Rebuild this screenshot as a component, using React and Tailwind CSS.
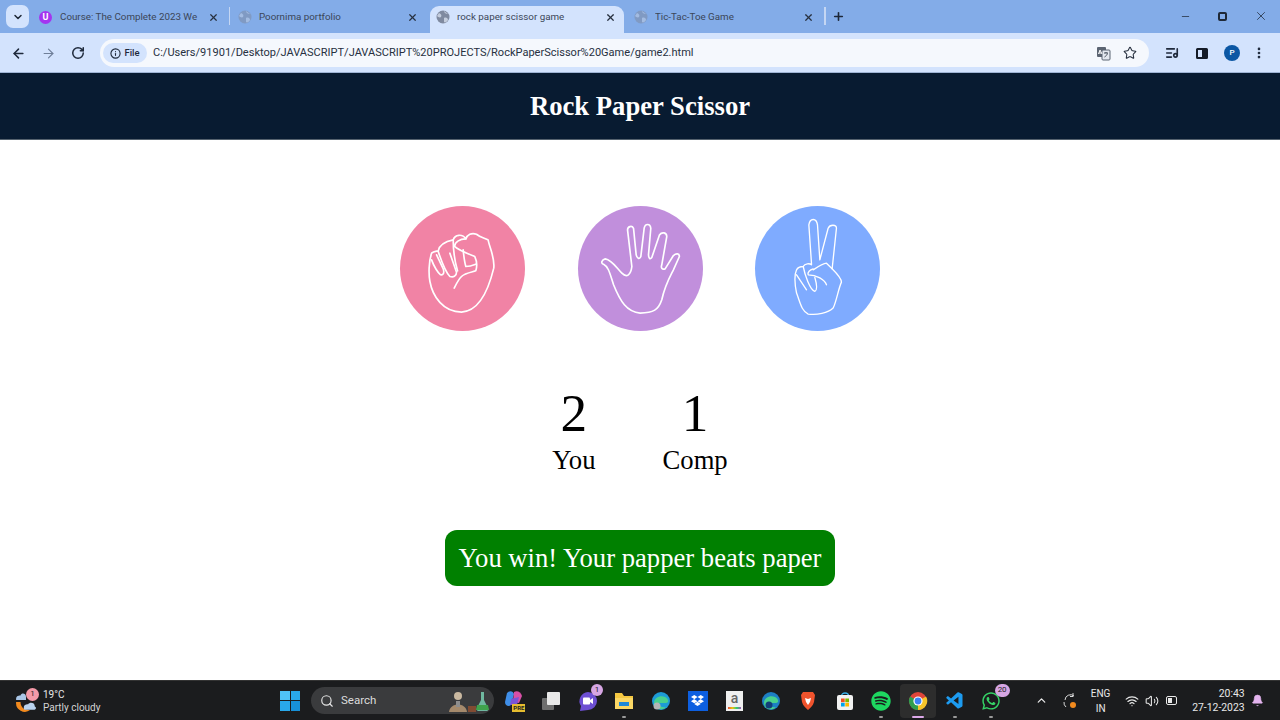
import React from "react";
import { ArrowLeft, ArrowRight, RotateCw, X, Plus, Minus, ChevronDown, ChevronUp, Star, Info, MoreVertical, Search, Wifi, Volume2, Bell, ListMusic } from "lucide-react";
import { FaDropbox, FaSpotify, FaWhatsapp } from "react-icons/fa";
import { VscVscode } from "react-icons/vsc";

const ui = "font-['Roboto','Noto_Sans',sans-serif]";

function Globe({ faint }) {
  return (
    <svg width="14" height="14" viewBox="0 0 14 14" className={`shrink-0 ${faint ? "opacity-50" : ""}`}>
      <circle cx="7" cy="7" r="6.5" fill="#7f8aa0" />
      <path d="M3 3 C5 4 6 5 5 7 C4 8 2 7 1 6 M8 1 C8 3 10 4 12 4 M8 8 C10 7 12 8 12 10 C11 12 9 13 8 12 Z" fill="#c4cddd" />
    </svg>
  );
}

function Tab({ title, active, icon, className }) {
  return (
    <div className={`flex h-[27px] w-[194px] shrink-0 items-center rounded-t-[9px] pb-[5px] pl-[6px] pr-[8.5px] ${active ? "bg-[#d3e3fd]" : ""} ${className || ""}`}>
      <span className="flex w-[21px] shrink-0 items-center">{icon || <Globe faint={!active} />}</span>
      <span className="min-w-0 flex-1 overflow-hidden whitespace-nowrap text-[9.8px] text-[#3b4658]">{title}</span>
      <X size={11} strokeWidth={2.6} className="shrink-0 text-[#27303f]" />
    </div>
  );
}

function Sep() {
  return <div className="h-[18px] w-[1.5px] shrink-0 bg-[#c4d6f3]" />;
}

function Chrome() {
  return (
    <div className={`${ui} flex h-[73px] flex-col bg-[#83ace8]`}>
      <div className="flex h-[33px] shrink-0 items-end">
        <div className="mb-[5px] ml-[6px] mr-[4px] flex h-[23px] w-[23px] shrink-0 items-center justify-center rounded-[7px] bg-[#d3e3fd]">
          <ChevronDown size={12} strokeWidth={3} className="text-[#1f2937]" />
        </div>
        <Tab
          title="Course: The Complete 2023 We"
          icon={
            <span className="flex h-[13px] w-[13px] items-center justify-center rounded-full bg-[#a435f0] text-[9px] font-bold leading-none text-white">U</span>
          }
        />
        <div className="mx-[1.75px] mb-[8px] flex"><Sep /></div>
        <Tab title="Poornima portfolio" />
        <Tab active title="rock paper scissor game" className="ml-[4px]" />
        <Tab title="Tic-Tac-Toe Game" className="ml-[4px]" />
        <div className="mb-[8px] ml-[2px] flex items-center">
          <Sep />
          <Plus size={13} strokeWidth={3} className="ml-[6px] text-[#1c2738]" />
        </div>
        <div className="mb-[10px] ml-auto flex items-center text-[#1f2937]">
          <Minus size={11} strokeWidth={1.6} className="mr-[27px]" />
          <span className="mr-[27px] h-[9px] w-[9px] rounded-[2px] border-2 border-[#1f2937]" />
          <X size={14} strokeWidth={1.3} className="mr-[12px]" />
        </div>
      </div>
      <div className="flex h-[40px] items-center border-b border-[#9fb4d4] bg-[#d3e3fd] pt-[1px]">
        <ArrowLeft size={15} strokeWidth={2.4} className="ml-[11px] text-[#1f2a3c]" />
        <ArrowRight size={15} strokeWidth={1.8} className="ml-[15px] text-[#6f7f99]" />
        <RotateCw size={14} strokeWidth={2.6} className="ml-[15px] text-[#1f2a3c]" />
        <div className="ml-[15px] flex h-[28px] w-[1049px] items-center rounded-full bg-[#f5f8fd]">
          <div className="ml-[3px] flex h-[20px] w-[44px] items-center justify-center gap-[3px] rounded-full bg-[#d3e3fd] text-[9.5px] font-medium text-[#1f2a3c]">
            <Info size={11} strokeWidth={2.4} />
            File
          </div>
          <span className="ml-[6px] whitespace-nowrap text-[11.04px] text-[#27303f]">C:/Users/91901/Desktop/JAVASCRIPT/JAVASCRIPT%20PROJECTS/RockPaperScissor%20Game/game2.html</span>
          <svg width="15" height="15" viewBox="0 0 15 15" className="ml-auto">
            <rect x="1" y="1" width="9" height="10" rx="1" fill="#5b6472" />
            <rect x="6" y="4" width="8" height="10" rx="1" fill="#e3e8f0" stroke="#5b6472" />
            <path d="M8 7h4M10 6v1M8.5 11 C10 10 11 9 11.5 7.5" stroke="#3f4854" fill="none" />
            <path d="M4 4 L2.5 8 M4 4 L6 8 M3 7h2.5" stroke="#fff" fill="none" />
          </svg>
          <Star size={14} strokeWidth={1.8} className="ml-[12px] mr-[12px] text-[#27303f]" />
        </div>
        <ListMusic size={14} strokeWidth={2.8} className="ml-[16px] text-[#1f2a3c]" />
        <div className="ml-[17px] flex h-[11px] w-[12px] justify-end rounded-[1.5px] border-2 border-[#141b27]">
          <span className="h-full w-[4px] bg-[#141b27]" />
        </div>
        <div className="ml-[16px] flex h-[16px] w-[16px] items-center justify-center rounded-full bg-[#0b57a4] text-[8px] font-medium text-white">P</div>
        <MoreVertical size={14} strokeWidth={2.6} className="ml-[12px] text-[#1f2a3c]" />
      </div>
    </div>
  );
}

const handCls = "fill-none stroke-white";

function Fist() {
  return (
    <svg viewBox="30 33 376 376" className="h-full w-full" strokeLinecap="round" strokeLinejoin="round">
      <g className={handCls} strokeWidth="5">
        <path d="M125,175 C116,200 116,240 120,260 C128,305 160,352 215,352 C265,350 295,290 312,220 C316,190 300,160 295,135 C288,130 272,128 260,118 C245,112 232,120 228,132 C218,116 195,118 190,135 C175,138 150,145 145,168 C135,170 130,170 125,175 Z" />
        <path d="M125,195 C132,215 145,235 152,240 C160,242 164,235 160,222 L140,180" />
        <path d="M145,170 C155,200 170,235 180,245 C190,248 200,245 200,232 L180,175" />
        <path d="M190,135 C190,155 192,190 203,228" />
        <path d="M228,132 C210,132 193,142 195,155 C205,165 230,175 255,185 C262,200 262,215 258,228 C245,232 225,235 215,245 C205,255 198,270 193,280" />
        <path d="M220,165 C222,185 225,205 228,215 C238,215 248,212 258,208" />
      </g>
    </svg>
  );
}

function Palm() {
  return (
    <svg viewBox="563 33 376 376" className="h-full w-full" strokeLinecap="round" strokeLinejoin="round">
      <path className={handCls} strokeWidth="5" d="M645,192 C635,195 630,205 640,208 C655,215 660,240 670,270 C690,320 710,352 750,355 C790,355 805,345 815,315 C825,270 840,245 850,225 L868,185 C868,175 858,175 850,182 L825,222 C815,225 812,218 815,210 L830,125 C830,112 815,110 808,120 L785,188 C780,195 775,190 775,180 L782,100 C780,85 765,85 762,100 L752,185 C748,195 740,190 738,180 L730,100 C725,90 712,95 712,105 L725,215 C722,240 710,250 695,235 C680,220 665,195 645,192 Z" />
    </svg>
  );
}

function Peace() {
  return (
    <svg viewBox="30 33 376 376" className="h-full w-full" strokeLinecap="round" strokeLinejoin="round">
      <g className={handCls} strokeWidth="4">
        <path d="M200,207 L192,90 C195,68 215,68 218,90 L225,195 L250,100 C255,88 275,88 275,100 L262,222 C275,235 290,250 290,262 C280,285 275,320 265,340 C250,355 215,362 190,358 C170,350 165,320 155,295 C150,270 148,240 155,225 C160,215 170,215 175,215 C180,205 195,205 200,210" />
        <path d="M175,215 C180,240 195,285 210,290 C220,285 215,265 210,248" />
        <path d="M155,240 L185,285" />
        <path d="M205,222 C195,225 187,232 190,240 C215,240 240,255 245,270" />
        <path d="M205,225 C220,215 235,205 245,205 L262,222" />
      </g>
    </svg>
  );
}

function Choice({ color, children }) {
  return <div className={`h-[125px] w-[125px] rounded-full ${color}`}>{children}</div>;
}

function Score({ value, label }) {
  return (
    <div className="flex flex-col items-center">
      <p className="text-[53.3px] leading-[58px] text-black">{value}</p>
      <p className="mt-[2px] text-[26.67px] leading-[30px] text-black">{label}</p>
    </div>
  );
}

function Main() {
  return (
    <div className="flex h-[607px] flex-col font-['Liberation_Serif',serif]">
      <header className="flex h-[67px] items-center justify-center border-b border-[#55626e] bg-[#081b31]">
        <h1 className="text-[26.67px] font-bold text-white">Rock Paper Scissor</h1>
      </header>
      <div className="mt-[66px] flex justify-center gap-[52.5px]">
        <Choice color="bg-[#f183a5]"><Fist /></Choice>
        <Choice color="bg-[#c18fdc]"><Palm /></Choice>
        <Choice color="bg-[#7fabff]"><Peace /></Choice>
      </div>
      <div className="mt-[54px] flex justify-center gap-[67px]">
        <Score value="2" label="You" />
        <Score value="1" label="Comp" />
      </div>
      <div className="mt-[55px] flex justify-center">
        <div className="rounded-[12px] bg-[#008000] px-[13.5px] py-[13px] text-[26.67px] leading-[30px] text-white">You win! Your papper beats paper</div>
      </div>
    </div>
  );
}

function TaskIcon({ children, active, dot }) {
  return (
    <div className={`relative flex h-[34px] w-[36.7px] shrink-0 items-center justify-center rounded-[4px] ${active ? "bg-[#2d2d2d]" : ""}`}>
      {children}
      {dot && <span className={`absolute bottom-[0px] h-[2px] rounded-full ${active ? "w-[12px] bg-[#dca8e8]" : "w-[4px] bg-[#9a9a9a]"}`} />}
    </div>
  );
}

function Badge({ children, className }) {
  return <span className={`absolute flex items-center justify-center rounded-full text-[8px] leading-none text-[#222] ${className}`}>{children}</span>;
}

function Taskbar() {
  return (
    <div className={`${ui} flex h-[40px] items-center border-t border-[#333] bg-[#1b1c1e] text-[#e8e8e8]`}>
      <div className="relative ml-[15px] flex h-[24px] w-[28px] shrink-0 items-center">
        <svg width="22" height="22" viewBox="0 0 20 20">
          <path d="M1 8 C1 5 4 5 5 5 C6 2 10 3 10 6 L10 9 L1 9 Z" fill="#a9c5e6" />
          <path d="M1 11 A8 8 0 0 0 14 18 C9 19 5 16 5 11 Z" fill="#f28a1e" />
          <path d="M8 16 C8 13 11 13 12 13 C13 11 18 11 18 15 C20 16 19 18 17 18 L9 18 C8 18 8 17 8 16 Z" fill="#b9d3ef" />
        </svg>
        <Badge className="left-[11px] top-[-1px] h-[13px] w-[13px] bg-[#f49aa8]">1</Badge>
      </div>
      <div className="w-[70px] shrink-0 text-[10px] leading-[13px]">
        <p>19°C</p>
        <p className="whitespace-nowrap text-[#d4d4d4]">Partly cloudy</p>
      </div>
      <div className="ml-[167px] grid h-[20px] w-[20px] shrink-0 grid-cols-2 gap-[1px]">
        <span className="bg-[#4fc3f7]" /><span className="bg-[#29a8ea]" />
        <span className="bg-[#29a8ea]" /><span className="bg-[#1790d8]" />
      </div>
      <div className="relative ml-[11px] flex h-[27px] w-[183px] shrink-0 items-center rounded-full bg-[#3a3b3d] pl-[9px] text-[11.5px] text-[#dcdcdc]">
        <Search size={14} strokeWidth={2} className="text-[#e5e5e5]" />
        <span className="ml-[7px]">Search</span>
        <svg width="44" height="24" viewBox="0 0 44 24" className="absolute right-[2px] top-[2px]">
          <circle cx="10" cy="7" r="4" fill="#c9b8a0" />
          <path d="M1 23 C2 13 18 13 19 23 Z" fill="#a58a6c" />
          <path d="M8 12h4v6H8z" fill="#8d8d8d" />
          <path d="M20 23h8v-6h-8z" fill="#a0522d" opacity="0.7" />
          <path d="M33 3h3v8l4 8a2 2 0 0 1-2 3h-7a2 2 0 0 1-2-3l4-8z" fill="#6fb8a0" />
          <path d="M29 16h11l1 5h-13z" fill="#3fa34d" />
        </svg>
      </div>
      <div className="ml-[2px] flex items-center">
        <TaskIcon>
          <div className="relative h-[22px] w-[20px]">
            <svg width="20" height="20" viewBox="0 0 20 20">
              <path d="M3 3 C6 0 9 1 10 4 L7 15 C5 17 1 16 1 12 Z" fill="#3f8ee8" />
              <path d="M10 2 C13 0 17 2 18 6 L15 13 L9 12 Z" fill="#d84fa7" />
              <path d="M7 9 L15 7 L13 15 L6 15 Z" fill="#7b54d6" />
            </svg>
            <span className="absolute bottom-0 right-[-1px] flex h-[8px] w-[13px] items-center justify-center bg-[#e6bd2f] text-[6px] font-bold leading-none text-[#222]">PRE</span>
          </div>
        </TaskIcon>
        <TaskIcon>
          <div className="relative h-[18px] w-[18px]">
            <span className="absolute bottom-0 left-0 h-[12px] w-[12px] rounded-[1px] bg-[#6e6e6e]" />
            <span className="absolute right-0 top-0 h-[13px] w-[13px] rounded-[1px] bg-[#e8e8e8]" />
          </div>
        </TaskIcon>
        <TaskIcon>
          <svg width="20" height="20" viewBox="0 0 20 20">
            <path d="M10 1 A9 9 0 0 1 10 19 L2 20 L3 15 A9 9 0 0 1 10 1 Z" fill="#6d4fd3" />
            <rect x="5" y="6.5" width="7" height="7" rx="1" fill="#fff" />
            <path d="M12 9l3-2v6l-3-2z" fill="#fff" />
          </svg>
          <Badge className="right-[3px] top-[0px] h-[12px] w-[12px] bg-[#d7a6e4]">1</Badge>
        </TaskIcon>
        <TaskIcon dot>
          <svg width="20" height="20" viewBox="0 0 20 20">
            <path d="M1 2h7l2 3h9v13H1z" fill="#f5c842" />
            <path d="M1 7h18v11H1z" fill="#fbd765" />
            <rect x="5" y="11" width="10" height="4" fill="#1e88d8" />
          </svg>
        </TaskIcon>
        <TaskIcon>
          <svg width="20" height="20" viewBox="0 0 20 20">
            <circle cx="10" cy="10" r="9" fill="#1d9bd6" />
            <path d="M3 12 C3 6 10 4 14 6 C18 8 18 12 15 12 L8 12 C7 14 10 17 15 16 C12 20 3 19 3 12 Z" fill="#48d18f" />
            <circle cx="6" cy="15" r="3.5" fill="#b5b5b5" />
          </svg>
        </TaskIcon>
        <TaskIcon>
          <div className="flex h-[20px] w-[20px] items-center justify-center bg-[#0d5fe0]">
            <FaDropbox size={13} className="text-white" />
          </div>
        </TaskIcon>
        <TaskIcon>
          <div className="flex h-[20px] w-[17px] flex-col items-center bg-[#efefef] text-[14px] font-medium leading-[15px] text-[#666]">
            a
            <span className="mt-[1px] h-[2px] w-[13px] bg-[linear-gradient(90deg,#e74c3c,#f1c40f,#2ecc71,#9b59b6)]" />
          </div>
        </TaskIcon>
        <TaskIcon>
          <svg width="20" height="20" viewBox="0 0 20 20">
            <circle cx="10" cy="10" r="9" fill="#1d7fc4" />
            <path d="M3 12 C3 6 10 4 14 6 C18 8 18 12 15 12 L8 12 C7 14 10 17 15 16 C12 20 3 19 3 12 Z" fill="#48d18f" />
            <circle cx="8" cy="14" r="3.5" fill="#123f7a" />
          </svg>
        </TaskIcon>
        <TaskIcon>
          <svg width="16" height="20" viewBox="0 0 16 20">
            <path d="M3 1h10l2 3-1 7c-1 4-4 6-6 8-2-2-5-4-6-8L1 4z" fill="#f0532d" />
            <path d="M5 7l3 1 3-1-1 4-2 3-2-3z" fill="#fff" />
          </svg>
        </TaskIcon>
        <TaskIcon>
          <svg width="18" height="20" viewBox="0 0 18 20">
            <path d="M5.5 5 C5.5 1 12.5 1 12.5 5" stroke="#3ab0e8" strokeWidth="1.3" fill="none" />
            <rect x="1" y="4" width="16" height="15" rx="2" fill="#f2f2f2" />
            <rect x="5" y="7.5" width="3.7" height="3.7" fill="#f25022" />
            <rect x="9.3" y="7.5" width="3.7" height="3.7" fill="#7fba00" />
            <rect x="5" y="11.8" width="3.7" height="3.7" fill="#00a4ef" />
            <rect x="9.3" y="11.8" width="3.7" height="3.7" fill="#ffb900" />
          </svg>
        </TaskIcon>
        <TaskIcon dot>
          <FaSpotify size={20} className="text-[#1ed760]" />
        </TaskIcon>
        <TaskIcon active dot>
          <svg width="20" height="20" viewBox="0 0 20 20">
            <circle cx="10" cy="10" r="9" fill="#e0453a" />
            <path d="M10 10 L18 5.5 A9 9 0 0 1 10 19 Z" fill="#f6c42a" />
            <path d="M10 10 L10 19 A9 9 0 0 1 2.2 5.5 Z" fill="#2f9e4f" />
            <circle cx="10" cy="10" r="4.6" fill="#fff" />
            <circle cx="10" cy="10" r="3.4" fill="#3b82f6" />
          </svg>
        </TaskIcon>
        <TaskIcon dot>
          <VscVscode size={20} className="text-[#1d9bf0]" />
        </TaskIcon>
        <TaskIcon dot>
          <FaWhatsapp size={20} className="text-[#35d366]" />
          <Badge className="right-[0px] top-[0px] h-[13px] w-[15px] bg-[#d7a6e4]">20</Badge>
        </TaskIcon>
      </div>
      <ChevronUp size={13} strokeWidth={2.4} className="ml-[25px] shrink-0" />
      <svg width="16" height="18" viewBox="0 0 16 18" className="ml-[14px] shrink-0">
        <path d="M3 8 A5.5 5.5 0 0 1 12 4 M11 1v3.5H8M4 15 A5.5 5.5 0 0 1 2 10" stroke="#d9d9d9" strokeWidth="1" fill="none" />
        <circle cx="11" cy="13" r="3" fill="#f28a1e" />
      </svg>
      <div className="ml-[10px] w-[26px] shrink-0 text-center text-[10px] leading-[15px]">
        <p>ENG</p>
        <p>IN</p>
      </div>
      <Wifi size={14} strokeWidth={2} className="ml-[11px] shrink-0" />
      <Volume2 size={14} strokeWidth={1.8} className="ml-[6px] shrink-0" />
      <div className="ml-[7px] flex h-[9px] w-[11px] shrink-0 rounded-[2px] border border-[#e8e8e8] p-[1px]">
        <span className="h-full w-[4px] bg-[#e8e8e8]" />
      </div>
      <div className="ml-[14px] w-[54px] shrink-0 text-right text-[10.4px] leading-[14px]">
        <p>20:43</p>
        <p className="whitespace-nowrap">27-12-2023</p>
      </div>
      <Bell size={13} fill="#e4b4ee" strokeWidth={1} className="ml-[6px] shrink-0 text-[#e4b4ee]" />
    </div>
  );
}

export default function App() {
  return (
    <div className="flex h-[720px] w-[1280px] flex-col overflow-hidden bg-white">
      <Chrome />
      <Main />
      <Taskbar />
    </div>
  );
}
